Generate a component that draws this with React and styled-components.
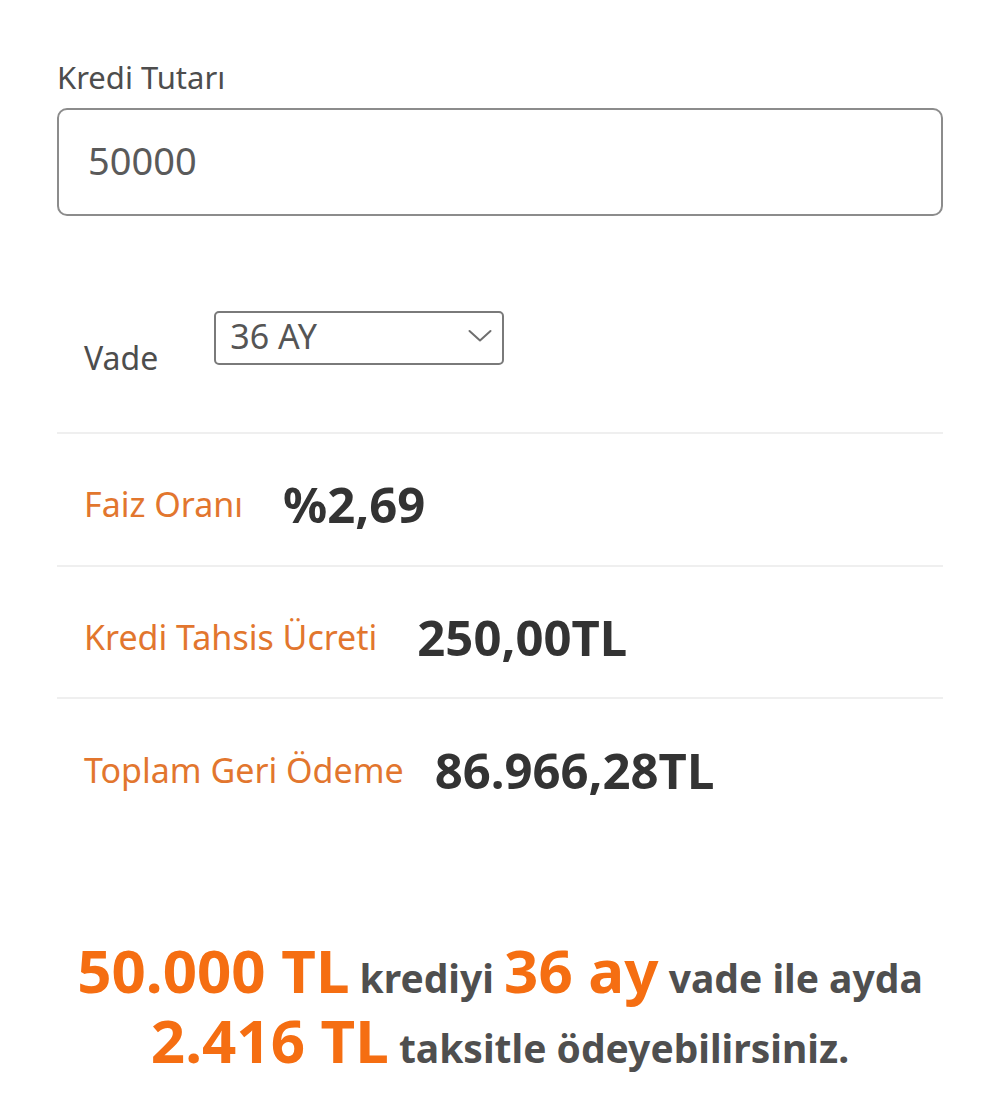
import React from "react";
import styled, { createGlobalStyle } from "styled-components";

const Global = createGlobalStyle`
  html, body { margin: 0; padding: 0; background: #ffffff; }
  body { font-family: "Noto Sans", "Open Sans", sans-serif; }
`;

const Page = styled.div`
  width: 1000px;
  height: 1113px;
  box-sizing: border-box;
  padding: 54px 57px 0 57px;
  background: #fff;
  overflow: hidden;
`;

const FieldLabel = styled.div`
  font-size: 31px;
  line-height: 46px;
  color: #4d4d4d;
`;

const InputBox = styled.div`
  margin-top: 8px;
  height: 108px;
  box-sizing: border-box;
  border: 2px solid #8c8c8c;
  border-radius: 10px;
  display: flex;
  align-items: center;
  padding: 0 0 4px 29px;
  font-size: 38px;
  color: #5a5a5a;
`;

const VadeRow = styled.div`
  display: flex;
  align-items: flex-start;
  gap: 56px;
  margin-top: 95px;
  padding-left: 27px;
  height: 121px;
  border-bottom: 2px solid #efefef;
`;

const VadeLabel = styled.div`
  margin-top: 24px;
  font-size: 32px;
  line-height: 46px;
  color: #4d4d4d;
`;

const Select = styled.div`
  width: 290px;
  height: 54px;
  box-sizing: border-box;
  border: 2px solid #7a7a7a;
  border-radius: 5px;
  display: flex;
  align-items: center;
  justify-content: space-between;
  padding: 0 10px 4px 14px;
  font-size: 34px;
  color: #555;
`;

const InfoRow = styled.div`
  display: flex;
  align-items: center;
  gap: ${(p) => p.$gap}px;
  height: 132.5px;
  padding: 10px 0 0 27px;
  box-sizing: border-box;
  border-bottom: ${(p) => (p.$last ? "none" : "2px solid #efefef")};
`;

const InfoLabel = styled.div`
  font-size: 34px;
  color: #e2762e;
`;

const InfoValue = styled.div`
  font-size: 49px;
  font-weight: 700;
  color: #333333;
`;

const Summary = styled.div`
  margin-top: 108px;
  text-align: center;
  color: #4f4f4f;
  font-weight: 700;
  font-size: 39px;
`;

const SummaryLine = styled.div`
  height: 70px;
  line-height: 70px;
`;

const Highlight = styled.span`
  color: #f56e12;
  font-size: 60px;
  line-height: 1;
`;

const Chevron = () => (
  <svg width="24" height="14" viewBox="0 0 24 14" fill="none">
    <path d="M1.5 2 L12 11.5 L22.5 2" stroke="#6f6f6f" strokeWidth="2" strokeLinecap="round" strokeLinejoin="round" />
  </svg>
);

export default function App() {
  return (
    <Page>
      <Global />
      <FieldLabel>Kredi Tutarı</FieldLabel>
      <InputBox>50000</InputBox>
      <VadeRow>
        <VadeLabel>Vade</VadeLabel>
        <Select>
          <span>36 AY</span>
          <Chevron />
        </Select>
      </VadeRow>
      <InfoRow $gap={40}>
        <InfoLabel>Faiz Oranı</InfoLabel>
        <InfoValue>%2,69</InfoValue>
      </InfoRow>
      <InfoRow $gap={40}>
        <InfoLabel>Kredi Tahsis Ücreti</InfoLabel>
        <InfoValue>250,00TL</InfoValue>
      </InfoRow>
      <InfoRow $gap={31} $last>
        <InfoLabel>Toplam Geri Ödeme</InfoLabel>
        <InfoValue>86.966,28TL</InfoValue>
      </InfoRow>
      <Summary>
        <SummaryLine>
          <Highlight>50.000 TL</Highlight> krediyi <Highlight>36 ay</Highlight> vade ile ayda
        </SummaryLine>
        <SummaryLine>
          <Highlight>2.416 TL</Highlight> taksitle ödeyebilirsiniz.
        </SummaryLine>
      </Summary>
    </Page>
  );
}
